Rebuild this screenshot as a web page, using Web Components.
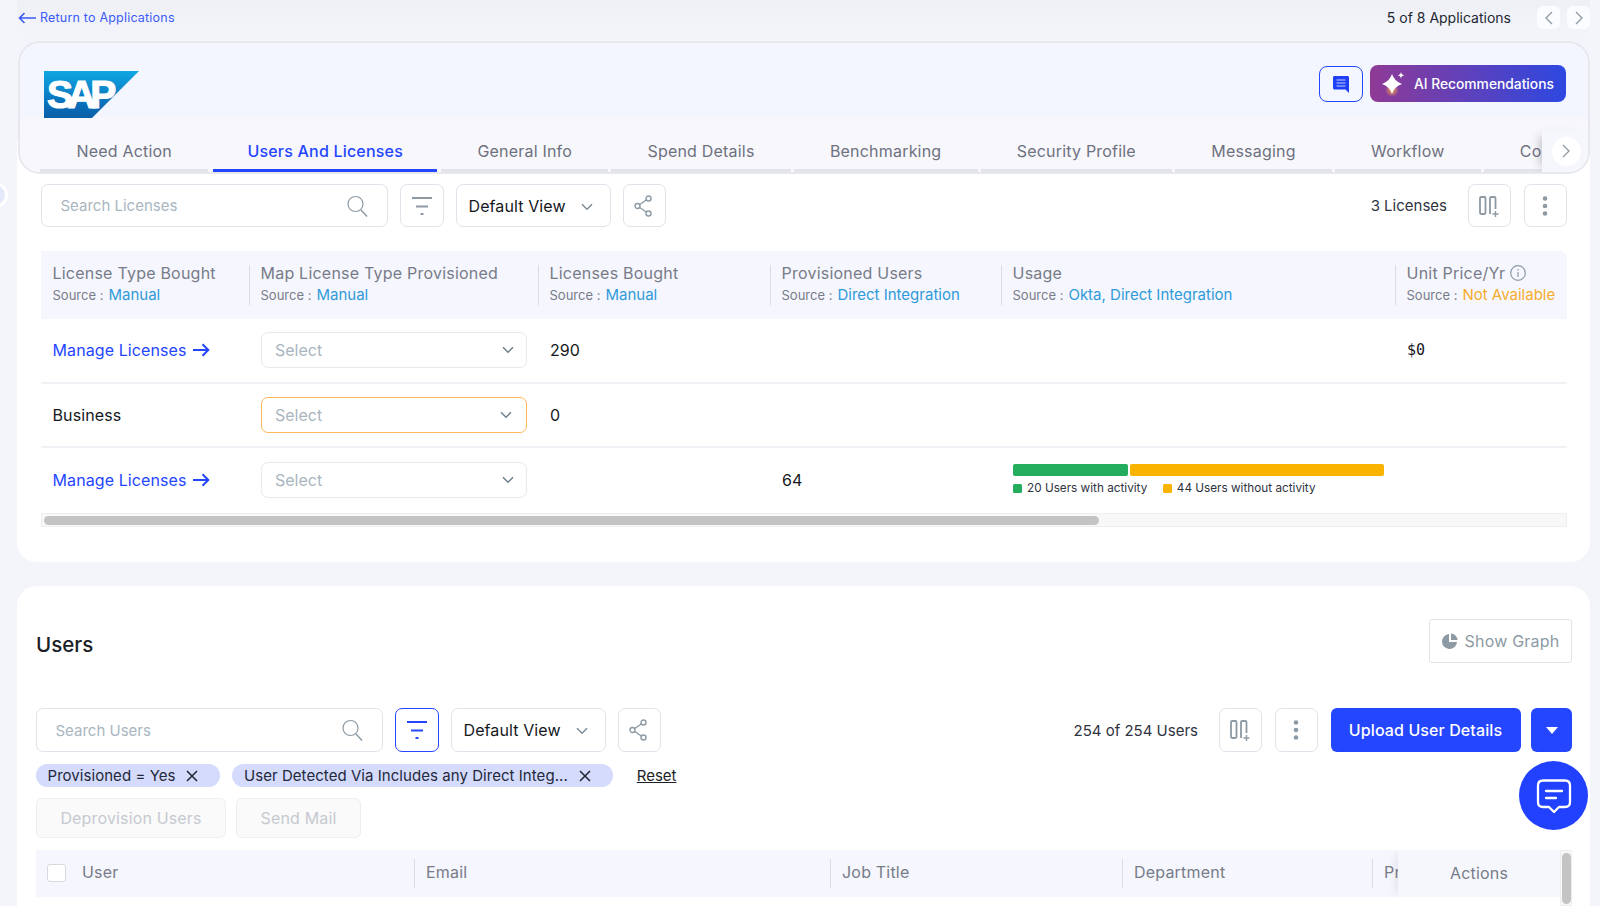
<!DOCTYPE html>
<html lang="en"><head><meta charset="utf-8"><title>Users And Licenses</title>
<style>
html,body{margin:0;padding:0;height:906px;overflow:hidden;background:#f3f5fb;font-family:Inter,"Liberation Sans",sans-serif;}
</style></head><body>
<app-page></app-page>
<script>
const ICONS={
 search:'<svg width="24" height="24" viewBox="0 0 24 24" fill="none" stroke="#8d9aa4" stroke-width="1.2"><circle cx="10.5" cy="10" r="7.5"/><path d="M16 16l6 6.5" stroke-width="1.5"/></svg>',
 filter:'<svg width="22" height="20" viewBox="0 0 22 20" fill="none" stroke="currentColor" stroke-width="2"><path d="M1 2h20M5 10.500h12M9.500 18h3"/></svg>',
 share:'<svg width="20" height="22" viewBox="0 0 20 22" fill="none" stroke="currentColor" stroke-width="1.4"><circle cx="14.500" cy="3.500" r="2.500"/><circle cx="14.500" cy="18.500" r="2.500"/><circle cx="3.500" cy="11" r="2.500"/><path d="M12.300 5L5.700 9.500M5.700 12.500l6.600 4.500"/></svg>',
 columns:'<svg width="22" height="22" viewBox="0 0 22 22" fill="none" stroke="currentColor" stroke-width="1.8"><rect x="2" y="2" width="5.500" height="17" rx="1.200"/><path d="M12 19V3.200C12 2.500 12.500 2 13.200 2h3.100c.7 0 1.200.5 1.200 1.200V14"/><path d="M17.500 16v6M14.500 19h6" stroke-width="1.400"/></svg>',
 more:'<svg width="6" height="20" viewBox="0 0 6 20" fill="currentColor"><circle cx="3" cy="2.500" r="2.300"/><circle cx="3" cy="10" r="2.300"/><circle cx="3" cy="17.500" r="2.300"/></svg>',
 chev:'<svg width="12" height="8" viewBox="0 0 12 8" fill="none" stroke="currentColor" stroke-width="1.500"><path d="M1 1.300l5 5 5-5"/></svg>',
 left:'<svg width="8" height="14" viewBox="0 0 8 14" fill="none" stroke="#8d9aa4" stroke-width="1.300"><path d="M7 1L1 7l6 6"/></svg>',
 right:'<svg width="8" height="14" viewBox="0 0 8 14" fill="none" stroke="#8d9aa4" stroke-width="1.300"><path d="M1 1l6 6-6 6"/></svg>',
 x:'<svg width="12" height="12" viewBox="0 0 12 12" fill="none" stroke="#1f2433" stroke-width="1.500"><path d="M1 1l10 10M11 1L1 11"/></svg>',
 pie:'<svg width="16" height="16" viewBox="0 0 16 16" fill="#8d9aa4"><path d="M7 1a7.500 7.500 0 1 0 8 8H7z"/><path d="M9 .5V7h6.500A7 7 0 0 0 9 .5z"/></svg>',
 arrow:'<svg width="17" height="14" viewBox="0 0 17 14" fill="none" stroke="#2546ff" stroke-width="2"><path d="M0 7h15M9.500 1.300L15.300 7l-5.800 5.700"/></svg>',
 back:'<svg width="18" height="12" viewBox="0 0 18 12" fill="none" stroke="#3a5bf5" stroke-width="1.600"><path d="M18 6H1.500M6.500 1L1.500 6l5 5"/></svg>',
 note:'<svg width="16" height="17" viewBox="0 0 16 17"><path d="M1.500 0h13c.8 0 1.500.7 1.500 1.500V17l-3.500-3.500h-11c-.8 0-1.500-.7-1.500-1.500V1.500C0 .7.700 0 1.500 0z" fill="#1f3ff5"/><path d="M3.500 4h9M3.500 7h9M3.500 10h9" stroke="#c5cffb" stroke-width="1.200"/></svg>',
 spark:'<svg width="24" height="24" viewBox="0 0 24 24"><defs><radialGradient id="g" cx=".5" cy=".5" r=".5"><stop offset="0" stop-color="#f6a04a"/><stop offset="1" stop-color="#f6a04a" stop-opacity="0"/></radialGradient></defs><circle cx="10" cy="18" r="7" fill="url(#g)"/><path d="M10 2Q12.500 9.500 20 12Q12.500 14.500 10 22Q7.500 14.500 0 12Q7.500 9.500 10 2z" fill="#fff"/><path d="M19 0c.4 2 1.200 2.800 3.200 3.200C20.200 3.600 19.400 4.500 19 6.500c-.4-2-1.200-2.900-3.200-3.300C17.800 2.800 18.600 2 19 0z" fill="#fff"/></svg>',
 bubble:'<svg width="38" height="38" viewBox="0 0 38 38" fill="none" stroke="#fff" stroke-width="2.300" stroke-linecap="round" stroke-linejoin="round"><path d="M8 2.500h22c3 0 5 2 5 5V24c0 3-2 5-5 5h-6l-5 5-5-5H8c-3 0-5-2-5-5V7.500c0-3 2-5 5-5z"/><path d="M11 13h16M11 20h10"/></svg>'
};
const def=(name,css,html)=>{
 customElements.define(name,class extends HTMLElement{
  constructor(){super();this.attachShadow({mode:'open'})}
  connectedCallback(){
   const h=typeof html==='function'?html(this):html;
   this.shadowRoot.innerHTML='<style>'+css+'</style>'+h;
  }
 });
};
def('top-bar',`:host{display:flex;height:41px;box-sizing:border-box;padding:6px 0 0 1px;align-items:flex-start;justify-content:space-between;font-size:12.500px;line-height:22px;background:linear-gradient(#eff0f5,#f3f5fb)}
.back{display:flex;align-items:center;gap:4px;color:#3a5bf5;letter-spacing:.2px;margin-top:1px}
.r{display:flex;align-items:center}
.n{font-size:14px;color:#222732;margin-right:26px}
b{display:flex;width:23px;height:23px;align-items:center;justify-content:center;background:#fbfcff;border-radius:6px;margin-left:7px}`,
`<div class="back">${ICONS.back}<span>Return to Applications</span></div><div class="r"><span class="n">5 of 8 Applications</span><b style="margin-left:0">${ICONS.left}</b><b>${ICONS.right}</b></div>`);

def('sap-logo',`:host{display:block;position:relative;width:95px;height:47px}
.bg{position:absolute;inset:0;clip-path:polygon(0 0,100% 0,50.500% 100%,0 100%);background:linear-gradient(#0fa7e2,#0a6cb6 75%,#0a5fa8)}
span{position:absolute;left:0;top:3px;font:700 39px/41px "Liberation Sans",sans-serif;color:#fff;letter-spacing:-5.500px;-webkit-text-stroke:1.200px #fff;padding-left:3px}`,
`<div class="bg"></div><span>SAP</span>`);

def('tab-strip',`:host{display:flex;position:relative;height:54px;box-sizing:border-box;padding-left:20.300px;background:#f8f8fc;overflow:hidden;gap:3px}
.t{height:100%;box-sizing:border-box;padding:14px 36.200px 0;display:flex;align-items:center;font-size:16px;letter-spacing:.2px;color:#6e7180;border-bottom:3px solid #e3e4ea;white-space:nowrap;flex:none}
.a{color:#2546ff;font-weight:500;border-bottom-color:#2546ff;padding:14px 33.500px 0 34.500px;margin:0 1.700px}
.more{position:absolute;right:0;top:12px;bottom:0;width:46px;background:#f6f7fc;box-shadow:-8px 0 10px -6px rgba(60,60,70,.3);display:flex;align-items:center;justify-content:center}
.more b{width:29px;height:29px;border-radius:50%;background:#fff;display:flex;align-items:center;justify-content:center;margin-left:2px}`,
()=>['Need Action','Users And Licenses','General Info','Spend Details','Benchmarking','Security Profile','Messaging','Workflow','Co'].map((t,i)=>`<div class="t${i==1?' a':''}">${t}</div>`).join('')+`<div class="more"><b>${ICONS.right}</b></div>`);

def('app-header',`:host{display:block;border:2px solid #e6e8ee;border-radius:22px;overflow:hidden;margin-left:1px;background:#f3f6fe}
.top{height:75px;display:flex;justify-content:space-between;padding:28px 22px 0 24px;box-sizing:border-box;background:#f3f6fe}
.btns{display:flex;gap:7px;margin-top:-6px;height:37px}
.c{width:44px;box-sizing:border-box;border:1.500px solid #2546ff;border-radius:8px;display:flex;align-items:center;justify-content:center;height:36px;margin-top:1px}
.ai{width:196px;box-sizing:border-box;border-radius:8px;background:linear-gradient(90deg,#8f3a96,#2d48e0);color:#fff;font-size:13.800px;font-weight:500;display:flex;align-items:center;padding-left:12px;gap:8px}`,
`<div class="top"><sap-logo></sap-logo><div class="btns"><div class="c">${ICONS.note}</div><div class="ai">${ICONS.spark}<span>AI Recommendations</span></div></div></div><tab-strip></tab-strip>`);

def('icon-btn',`:host{display:flex;width:43.500px;height:var(--tb-h,44px);box-sizing:border-box;border:1.500px solid #e1e3ea;border-radius:7px;align-items:center;justify-content:center;color:#8d9aa4;background:#fff;flex:none}
:host([active]){border-color:#2546ff;color:#2546ff}`,el=>ICONS[el.getAttribute('icon')]);

def('search-box',`:host{display:flex;width:347px;height:var(--tb-h,44px);box-sizing:border-box;border:1.500px solid #e1e3ea;border-radius:7px;align-items:center;justify-content:space-between;padding:0 18px 0 18.500px;font-size:15px;color:#a9b6c0;background:#fff;flex:none}`,
el=>`<span>${el.getAttribute('text')}</span>${ICONS.search}`);

def('view-select',`:host{display:flex;width:155px;height:var(--tb-h,44px);box-sizing:border-box;border:1.500px solid #e1e3ea;border-radius:7px;align-items:center;padding:0 17px 0 12px;justify-content:space-between;font-size:16px;letter-spacing:.1px;color:#16181d;background:#fff;flex:none}
span{color:#7e8d98;display:flex;margin-top:2px}`,`Default View<span>${ICONS.chev}</span>`);

def('tool-bar',`:host{display:flex;align-items:center;gap:12px;height:var(--tb-h,44px)}
.s{flex:1}`,`<slot></slot><div class="s"></div><slot name="end"></slot>`);

def('count-text',`:host{display:block;font-size:15px;color:#2f3341;margin-right:10px}`,`<slot></slot>`);

def('select-box',`:host{display:flex;width:266px;height:36px;box-sizing:border-box;border:1.500px solid #e7e9ee;border-radius:7px;align-items:center;justify-content:space-between;padding:0 12px 0 13px;font-size:16px;color:#a9b6c0;background:#fff}
:host([warn]){border-color:#ffb85c;padding-right:14px}
span{color:#6f7f8b;display:flex}`,`Select<span>${ICONS.chev}</span>`);

def('col-head',`:host{display:flex;flex-direction:column;justify-content:center;position:relative;padding:0 0 2px 11.500px;height:68px;box-sizing:border-box;white-space:nowrap;color:#787c88;font-size:16px;line-height:22px;letter-spacing:.22px}
:host(:not([first]))::before{content:"";position:absolute;left:0;top:14px;height:40px;width:1px;background:#dcdde4}
.s{font-size:13px;color:#787c88;display:flex;align-items:baseline;gap:5px;letter-spacing:0}
.v{font-size:15px;color:#2f9ad9}
.o{color:#f5ad2c}
svg{vertical-align:-2px;margin-left:5px}`,
el=>`<div>${el.getAttribute('title')}${el.hasAttribute('info')?'<svg width="16" height="16" viewBox="0 0 16 16" fill="none" stroke="#8d9aa4" stroke-width="1.200"><circle cx="8" cy="8" r="7.300"/><path d="M8 7v5M8 4v1.500"/></svg>':''}</div><div class="s">Source : <span class="v ${el.hasAttribute('warn')?'o':''}">${el.getAttribute('src')}</span></div>`);

def('manage-link',`:host{display:inline-flex;align-items:center;gap:6px;color:#2546ff;font-size:16px;letter-spacing:.1px}`,`Manage Licenses ${ICONS.arrow}`);

def('usage-bar',`:host{display:block;font-size:11.750px;color:#2f3341}
.b{display:flex;gap:2px;height:12px;width:371px}
.b i{display:block;border-radius:2px}
.l{display:flex;align-items:center;margin-top:5px;line-height:14px}
.l i{display:block;width:9px;height:9px;border-radius:1.500px;margin-right:5px}`,
`<div class="b"><i style="width:115px;background:#23ad5c"></i><i style="flex:1;background:#fab300"></i></div><div class="l"><i style="background:#23ad5c"></i><span>20 Users with activity</span><i style="background:#fab300;margin-left:15.500px"></i><span>44 Users without activity</span></div>`);

def('license-table',`:host{display:block;margin-top:24px}
.g{display:grid;grid-template-columns:208px 289px 232px 231px 394px 172px}
.h{background:#f5f6fe;border-radius:0 8px 0 0}
.r{align-items:center;border-bottom:2px solid #f0f1f4;box-sizing:border-box;font-size:16px;color:#16181d;height:64px}
.r>div{padding-left:12px}
.r>div:first-child{padding-left:11.500px;letter-spacing:.1px}
.m{font-family:"DejaVu Sans Mono",monospace;font-size:15px}
.sb{height:14px;box-sizing:border-box;border:1px solid #eceef0;background:#f8f8f8;padding:2px 0 0 2px}
.sb i{display:block;height:9px;width:1055px;border-radius:5px;background:#c4c4c4}`,
`<div class="g h"><col-head first title="License Type Bought" src="Manual"></col-head><col-head title="Map License Type Provisioned" src="Manual"></col-head><col-head title="Licenses Bought" src="Manual"></col-head><col-head title="Provisioned Users" src="Direct Integration"></col-head><col-head title="Usage" src="Okta, Direct Integration"></col-head><col-head title="Unit Price/Yr" info warn src="Not Available"></col-head></div>
<div class="g r" style="height:65px;padding-bottom:1px"><div><manage-link></manage-link></div><div><select-box></select-box></div><div>290</div><div></div><div></div><div class="m">$0</div></div>
<div class="g r"><div>Business</div><div><select-box warn></select-box></div><div>0</div><div></div><div></div><div></div></div>
<div class="g r" style="height:65px;border-bottom:0;padding-bottom:2px"><div><manage-link></manage-link></div><div><select-box></select-box></div><div></div><div>64</div><div><usage-bar></usage-bar></div><div></div></div>
<div class="sb"><i></i></div>`);

def('filter-chip',`:host{display:inline-flex;height:23px;align-items:center;border-radius:12px;background:#d5dbfc;font-size:15px;letter-spacing:.05px;color:#23283a;padding:0 22px 0 11.500px;gap:11px;white-space:nowrap;flex:none}`,`<slot></slot>${ICONS.x}`);

def('ghost-btn',`:host{display:flex;height:40px;box-sizing:border-box;align-items:center;justify-content:center;border:1.500px solid #eeeff1;border-radius:6px;background:#fafafa;color:#c6cad0;font-size:16px;letter-spacing:.15px}`,`<slot></slot>`);

def('users-table',`:host{display:block;position:relative;margin-top:12px;height:56px;overflow:hidden}
.h{display:grid;grid-template-columns:378px 416px 292px 250px 1fr;height:47px;background:#f5f6fe;color:#787c88;font-size:16px;letter-spacing:.2px}
.c{display:flex;align-items:center;padding:0 0 4px 12px;position:relative}
.c+.c::before{content:"";position:absolute;left:0;top:9px;height:29px;width:1px;background:#dcdde4}
.cb{width:19px;height:18px;box-sizing:border-box;border:1.500px solid #d8dae0;border-radius:3px;background:#fff;margin:2px 16px 0 0}
.f{padding-left:11px}
.act{position:absolute;left:1362px;top:0;width:162px;height:47px;box-sizing:border-box;padding-bottom:2px;display:flex;align-items:center;justify-content:center;background:#f6f7fd;color:#787c88;font-size:16px;letter-spacing:.2px;box-shadow:-6px 0 8px -4px rgba(60,60,70,.1)}
.act::after{content:"";position:absolute;left:0;right:0;top:47px;height:9px;background:#fff}
.sv{position:absolute;right:0;top:0;width:12px;height:56px;box-sizing:border-box;border:1px solid #eceef0;background:#f8f8f8;padding:2px 0 0 1px}
.sv i{display:block;width:9px;height:51px;border-radius:5px;background:#c4c4c4}`,
`<div class="h"><div class="c f"><span class="cb"></span>User</div><div class="c">Email</div><div class="c">Job Title</div><div class="c">Department</div><div class="c">Pr</div></div><div class="act">Actions</div><div class="sv"><i></i></div>`);

def('users-section',`:host{display:block;background:#fff;border-radius:20px 20px 0 0;margin-top:24px;padding:33px 18px 0 19px;height:320px;box-sizing:border-box;overflow:hidden}
.hd{display:flex;justify-content:space-between;align-items:center;height:44px;margin-bottom:45px}
h2{margin:6px 0 0;font-weight:500;font-size:20.500px;color:#1b1e26}
.g{display:flex;width:143px;box-sizing:border-box;height:44px;border:1.500px solid #e1e3ea;border-radius:3px;align-items:center;justify-content:center;gap:7px;color:#8d9aa4;font-size:16px;letter-spacing:.2px}
.up{display:flex;width:190px;height:44px;border-radius:6px;background:#2546ff;color:#fff;font-weight:500;font-size:16px;letter-spacing:.1px;align-items:center;justify-content:center;flex:none}
.ca{display:flex;width:41px;height:44px;border-radius:6px;background:#2546ff;align-items:center;justify-content:center;margin-left:-2px;flex:none}
.ca i{border:6px solid transparent;border-top:7px solid #fff;border-bottom:0}
.chips{display:flex;margin-top:12px;gap:12px;align-items:center;height:23px}
.re{font-size:15px;color:#1b1e26;text-decoration:underline;margin-left:12px}
.bt{display:flex;gap:10px;margin-top:11px}
.rs{display:flex;align-items:center;gap:12.500px}`,
`<div class="hd"><h2>Users</h2><div class="g">${ICONS.pie}<span>Show Graph</span></div></div>
<tool-bar><search-box text="Search Users"></search-box><icon-btn icon="filter" active></icon-btn><view-select></view-select><icon-btn icon="share"></icon-btn>
<div class="rs" slot="end"><count-text style="margin-right:8px">254 of 254 Users</count-text><icon-btn icon="columns"></icon-btn><icon-btn icon="more"></icon-btn><div class="up">Upload User Details</div><div class="ca"><i></i></div></div></tool-bar>
<div class="chips"><filter-chip>Provisioned = Yes</filter-chip><filter-chip>User Detected Via Includes any Direct Integ...</filter-chip><span class="re">Reset</span></div>
<div class="bt"><ghost-btn style="width:190px">Deprovision Users</ghost-btn><ghost-btn style="width:125px">Send Mail</ghost-btn></div>
<users-table></users-table>`);

def('chat-fab',`:host{position:absolute;left:1519px;top:761px;width:69px;height:69px;border-radius:50%;background:#2141ff;display:flex;align-items:center;justify-content:center;padding-top:2px;box-sizing:border-box}`,ICONS.bubble);
def('edge-dot',`:host{position:absolute;left:-18px;top:182px;width:26px;height:26px;border-radius:50%;background:#e4e8fb;border:3px solid #fff;box-sizing:border-box}`,'');

def('app-page',`:host{display:block;position:relative;height:906px;overflow:hidden;box-sizing:border-box;padding:0 10px 0 17px;background:#f3f5fb}
.card{background:linear-gradient(transparent 100px,#fff 100px);border-radius:0 0 20px 20px;padding-bottom:35px}
.in{padding:10px 23px 0 24px}
.rs{display:flex;align-items:center;gap:12.500px}`,
`<top-bar></top-bar><div class="card"><app-header></app-header><div class="in"><tool-bar style="--tb-h:43px"><search-box text="Search Licenses"></search-box><icon-btn icon="filter"></icon-btn><view-select></view-select><icon-btn icon="share"></icon-btn><div class="rs" slot="end"><count-text style="margin-right:8px">3 Licenses</count-text><icon-btn icon="columns"></icon-btn><icon-btn icon="more"></icon-btn></div></tool-bar><license-table></license-table></div></div><users-section></users-section><chat-fab></chat-fab><edge-dot></edge-dot>`);
</script></body></html>
